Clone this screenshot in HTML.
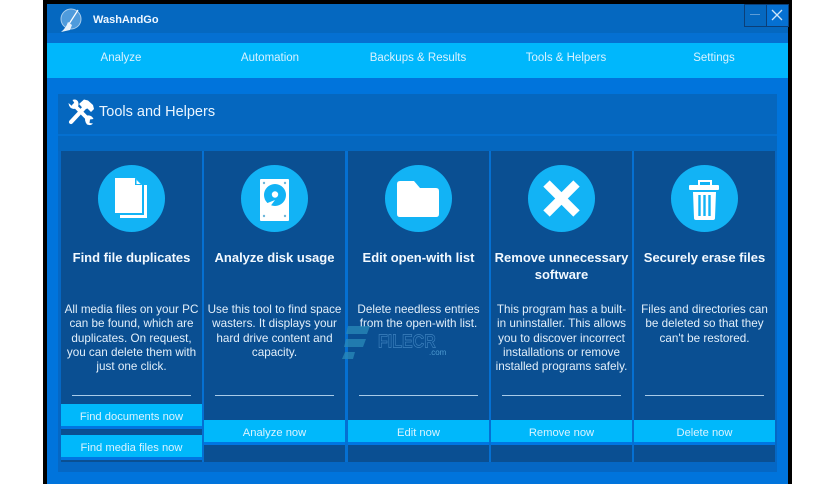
<!DOCTYPE html>
<html><head><meta charset="utf-8">
<style>
html,body{margin:0;padding:0;background:#fff}
#r{position:relative;width:836px;height:484px;overflow:hidden;background:#fff;font-family:"Liberation Sans",sans-serif;color:#fff;filter:blur(.3px)}
#r div,#r svg{position:absolute}
.t{white-space:nowrap;text-align:center}
.tab{top:43px;height:35px;line-height:30px;font-size:11.5px;color:#d8f2ff;text-align:center;white-space:nowrap}
.card{top:151px;width:141px;height:311px;background:#0a4f92}
.circ{top:14px;left:37px;width:67px;height:67px;border-radius:50%;background:#12b3f5}
.h{left:0;width:141px;top:99px;font-size:13px;line-height:16.5px;font-weight:bold;text-align:center;color:#f2f9ff}
.d{left:-3px;width:147px;top:152px;font-size:11.7px;line-height:14.3px;text-align:center;color:#e2effa;white-space:nowrap}
.ln{left:11px;width:119px;top:244px;height:1px;background:#a9cbe8}
.b{left:0;width:141px;height:22px;background:#00b8fb;border-bottom:3px solid #0076e2;text-align:center;font-size:11.2px;line-height:26px;color:#d9f3ff}
</style></head><body>
<div id="r">
<div style="left:43px;top:0;width:749px;height:484px;background:#000"></div>
<div style="left:47px;top:4px;width:741px;height:480px;background:#0074dc"></div>
<div style="left:47px;top:4px;width:741px;height:29px;background:#0568c0"></div>
<div style="left:47px;top:33px;width:741px;height:10px;background:#0570d2"></div>
<div style="left:47px;top:43px;width:741px;height:35px;background:#00b7fc"></div>

<svg style="left:59px;top:7px" width="24" height="26" viewBox="0 0 24 26">
<circle cx="12" cy="12" r="10" fill="#4f9bdc" stroke="#a8cdec" stroke-width="1"/>
<path d="M19 3 L10 17" stroke="#fff" stroke-width="1.2"/>
<path d="M9 15 L13 18 L11 23 L2 25 Q7 21 9 15Z" fill="#e8f2fb"/>
</svg>
<div class="t" style="left:93px;top:12px;font-size:11px;line-height:16px;font-weight:bold;color:#eef7ff">WashAndGo</div>

<div style="left:744px;top:4px;width:21px;height:21px;border:1px solid #0b3f78;background:#0568c0"></div>
<div style="left:766px;top:4px;width:21px;height:21px;border:1px solid #0b3f78;background:#0570d2"></div>
<div style="left:750px;top:14px;width:10px;height:1px;background:#5d9cd6"></div>
<svg style="left:771px;top:9px" width="12" height="12" viewBox="0 0 12 12"><path d="M1 1 L11 11 M11 1 L1 11" stroke="#cfe6fa" stroke-width="1.3"/></svg>

<div class="tab" style="left:61px;width:120px">Analyze</div>
<div class="tab" style="left:210px;width:120px">Automation</div>
<div class="tab" style="left:358px;width:120px">Backups &amp; Results</div>
<div class="tab" style="left:506px;width:120px">Tools &amp; Helpers</div>
<div class="tab" style="left:654px;width:120px">Settings</div>

<div style="left:58px;top:94px;width:719px;height:378px;background:#0567c4"></div>
<div style="left:58px;top:94px;width:719px;height:40px;background:#0567bf"></div>
<div style="left:58px;top:134px;width:719px;height:2px;background:#0570d0"></div>
<div style="left:58px;top:136px;width:719px;height:15px;background:#0567bf"></div>
<div style="left:61px;top:151px;width:714px;height:311px;background:#0570d2"></div>

<svg style="left:67px;top:98px" width="28" height="28" viewBox="0 0 28 28">
<path d="M6 6 L22 22" stroke="#fff" stroke-width="3.8"/>
<path d="M1.5 5 L5 8 L8 6 L5.5 2 Q9 0.5 11 3.5 Q12.5 7 10 10 L7 11 Q2 10.5 1.5 5Z" fill="#fff"/>
<path d="M18.5 18 Q24 16 26.5 21 L23 21.5 L22.5 25 L26 25.5 Q24 28 20 26.5 Q17 23 18.5 18Z" fill="#fff"/>
<path d="M4 24 L18 9" stroke="#fff" stroke-width="4.2" stroke-linecap="round"/>
<path d="M12 6 L17 1.5 L21 2.5 L26 7 L27 11 L24 14 L20.5 10.5 L17 11.5Z" fill="#fff"/>
</svg>
<div class="t" style="left:99px;top:102px;font-size:14.5px;line-height:20px;color:#eaf5ff">Tools and Helpers</div>

<div class="card" style="left:61px">
 <div class="circ"><svg style="left:0;top:0" width="67" height="67" viewBox="0 0 67 67">
 <path d="M17 13 H37 L44 20 V48 H17Z" fill="#fff"/>
 <path d="M37 13 L44 20 H37Z" fill="#12b3f5"/>
 <path d="M38.5 15 L42.5 19 H38.5Z" fill="#fff"/>
 <path d="M46 20 H49 V53 H22 V50 H46Z" fill="#fff"/>
 </svg></div>
 <div class="h">Find file duplicates</div>
 <div class="d">All media files on your PC<br>can be found, which are<br>duplicates. On request,<br>you can delete them with<br>just one click.</div>
 <div class="ln"></div>
 <div class="b" style="top:253px">Find documents now</div>
 <div class="b" style="top:284px">Find media files now</div>
</div>

<div class="card" style="left:204px">
 <div class="circ"><svg style="left:0;top:0" width="67" height="67" viewBox="0 0 67 67">
 <rect x="19" y="14" width="29" height="42" rx="1" fill="#fff"/>
 <circle cx="34" cy="30" r="11" fill="#12b3f5"/>
 <circle cx="34" cy="29.5" r="3.2" fill="#fff"/>
 <path d="M34 35 L28 43 L24 39Z" fill="#fff"/>
 <circle cx="23" cy="18" r="1.2" fill="#6cb6da"/><circle cx="44" cy="18" r="1.2" fill="#6cb6da"/>
 <circle cx="23" cy="51" r="1.2" fill="#6cb6da"/><circle cx="44" cy="51" r="1.2" fill="#6cb6da"/>
 </svg></div>
 <div class="h">Analyze disk usage</div>
 <div class="d">Use this tool to find space<br>wasters. It displays your<br>hard drive content and<br>capacity.</div>
 <div class="ln"></div>
 <div class="b" style="top:269px">Analyze now</div>
</div>

<div class="card" style="left:348px">
 <div class="circ"><svg style="left:0;top:0" width="67" height="67" viewBox="0 0 67 67">
 <path d="M15 16 Q12 16 12 19 V49 Q12 52 15 52 H51 Q54 52 54 49 V26 Q54 23 51 23 H35 L29 16Z" fill="#fff"/>
 </svg></div>
 <div class="h">Edit open-with list</div>
 <div class="d">Delete needless entries<br>from the open-with list.</div>
 <div class="ln"></div>
 <div class="b" style="top:269px">Edit now</div>
</div>

<div class="card" style="left:491px">
 <div class="circ"><svg style="left:0;top:0" width="67" height="67" viewBox="0 0 67 67">
 <path d="M18.5 18.5 L48.5 48.5 M48.5 18.5 L18.5 48.5" stroke="#fff" stroke-width="9"/>
 </svg></div>
 <div class="h">Remove unnecessary<br>software</div>
 <div class="d">This program has a built-<br>in uninstaller. This allows<br>you to discover incorrect<br>installations or remove<br>installed programs safely.</div>
 <div class="ln"></div>
 <div class="b" style="top:269px">Remove now</div>
</div>

<div class="card" style="left:634px">
 <div class="circ"><svg style="left:0;top:0" width="67" height="67" viewBox="0 0 67 67">
 <path d="M28 20 V16 H40 V20" fill="none" stroke="#fff" stroke-width="2"/>
 <rect x="18" y="20" width="30" height="5" rx="1" fill="#fff"/>
 <path d="M22 27 H45 L44 53 Q44 55 42 55 H25 Q23 55 23 53Z" fill="#fff"/>
 <path d="M28.5 30 V51 M33.5 30 V51 M38.5 30 V51" stroke="#12b3f5" stroke-width="2.4"/>
 </svg></div>
 <div class="h">Securely erase files</div>
 <div class="d">Files and directories can<br>be deleted so that they<br>can't be restored.</div>
 <div class="ln"></div>
 <div class="b" style="top:269px">Delete now</div>
</div>

<svg style="left:342px;top:326px" width="30" height="34" viewBox="0 0 30 34">
<path d="M6 0 H28 L25 8 H4Z M4 13 H24 L21 21 H2Z M3 26 H13 L11 33 H0Z" fill="#2a8ab8" opacity=".75"/>
</svg>
<div class="t" style="left:378px;top:334px;font-size:16px;line-height:18px;font-weight:bold;color:#0a4f92;-webkit-text-stroke:.6px #3f83bf;transform:scaleY(1.15)">FILECR</div>
<div class="t" style="left:429px;top:348px;font-size:8px;line-height:10px;color:#4d9ad0">.com</div>
</div>
</body></html>
